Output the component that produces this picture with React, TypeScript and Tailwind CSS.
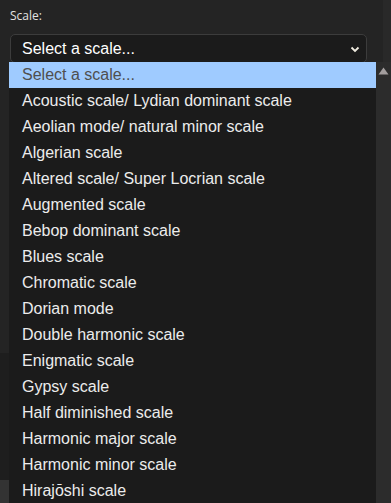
const scales = [
  "Acoustic scale/ Lydian dominant scale",
  "Aeolian mode/ natural minor scale",
  "Algerian scale",
  "Altered scale/ Super Locrian scale",
  "Augmented scale",
  "Bebop dominant scale",
  "Blues scale",
  "Chromatic scale",
  "Dorian mode",
  "Double harmonic scale",
  "Enigmatic scale",
  "Gypsy scale",
  "Half diminished scale",
  "Harmonic major scale",
  "Harmonic minor scale",
  "Hirajōshi scale",
];

export default function App() {
  return (
    <div className="relative h-[503px] w-full overflow-hidden bg-[#1e1e1e] font-['Liberation_Sans',Arial,sans-serif]">
      <div className="flex h-full">
        <div className="flex w-[383px] flex-col">
          <div className="h-[353px] bg-[#242424] px-[10px] pt-[7px]">
            <label className="block font-['Open_Sans',sans-serif] text-[12px] text-[#e2e2e2]">Scale:</label>
            <div className="mt-[9px] flex h-[29px] w-[357px] items-center justify-between rounded-[5px] border border-[#3c3c3c] bg-[#1b1b1b] pl-[11px] pr-[6px]">
              <span className="text-[16px] text-white">Select a scale...</span>
              <svg width="10" height="8" viewBox="0 0 10 8" fill="none" stroke="#f0ece0" strokeWidth="1.8">
                <path d="M1.5 2.5 L5 6 L8.5 2.5" />
              </svg>
            </div>
          </div>
          <div className="flex-1 bg-[#1e1e1e]" />
          <div className="h-[23px] w-[9px] bg-[#333333]" />
        </div>
        <div className="w-[8px] bg-[#292929]" />
      </div>

      <div className="absolute left-[9px] top-[62px] flex h-[441px] w-[382px]">
        <ul className="w-[367px] overflow-hidden bg-[#1b1b1b] text-[16px]">
          <li className="flex h-[26px] items-center bg-[#9fcbff] pl-[13px] text-[#4f4f4f]">Select a scale...</li>
          {scales.map((s) => (
            <li key={s} className="flex h-[26px] items-center pl-[13px] text-[#ececec]">
              {s}
            </li>
          ))}
        </ul>
        <div className="flex h-full w-[15px] justify-center bg-[#2c2c2c] pt-[5px]">
          <svg width="11" height="8" viewBox="0 0 11 8">
            <path d="M5.5 0.5 L10.5 7.5 L0.5 7.5 Z" fill="#a39e9e" />
          </svg>
        </div>
      </div>
    </div>
  );
}
